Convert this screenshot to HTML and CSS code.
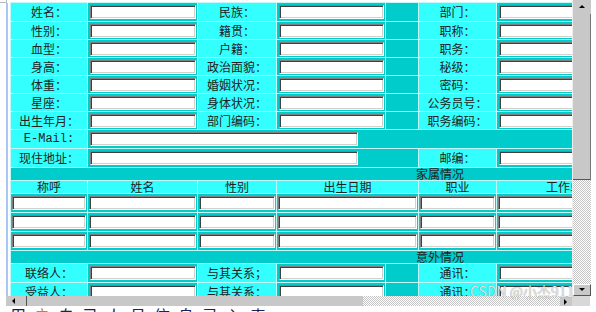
FILE: index.html
```html
<!DOCTYPE html>
<html lang="zh-CN">
<head>
<meta charset="UTF-8">
<title>员工信息录入</title>
<link rel="stylesheet" href="styles.css">
</head>
<body>
<div class="screen">
 <div class="corner-mark"></div>
 <div class="top">
  <div class="edge"></div>
  <div class="view">
   <table class="form">
    <colgroup>
     <col style="width:76px"><col style="width:109px"><col style="width:78px"><col style="width:108px">
     <col style="width:32px"><col style="width:77px"><col style="width:146px"><col style="width:225px">
    </colgroup>
    <tr>
     <td class="lb">姓名：</td><td class="in"><input></td>
     <td class="lb">民族：</td><td class="in"><input></td><td class="sp"></td>
     <td class="lb">部门：</td><td class="in"><input></td><td class="sp"></td>
    </tr>
    <tr class="s">
     <td class="lb">性别：</td><td class="in"><input></td>
     <td class="lb">籍贯：</td><td class="in"><input></td><td class="sp"></td>
     <td class="lb">职称：</td><td class="in"><input></td><td class="sp"></td>
    </tr>
    <tr class="s">
     <td class="lb">血型：</td><td class="in"><input></td>
     <td class="lb">户籍：</td><td class="in"><input></td><td class="sp"></td>
     <td class="lb">职务：</td><td class="in"><input></td><td class="sp"></td>
    </tr>
    <tr class="s">
     <td class="lb">身高：</td><td class="in"><input></td>
     <td class="lb">政治面貌：</td><td class="in"><input></td><td class="sp"></td>
     <td class="lb">秘级：</td><td class="in"><input></td><td class="sp"></td>
    </tr>
    <tr class="s">
     <td class="lb">体重：</td><td class="in"><input></td>
     <td class="lb">婚姻状况：</td><td class="in"><input></td><td class="sp"></td>
     <td class="lb">密码：</td><td class="in"><input></td><td class="sp"></td>
    </tr>
    <tr class="s">
     <td class="lb">星座：</td><td class="in"><input></td>
     <td class="lb">身体状况：</td><td class="in"><input></td><td class="sp"></td>
     <td class="lb">公务员号：</td><td class="in"><input></td><td class="sp"></td>
    </tr>
    <tr class="s">
     <td class="lb">出生年月：</td><td class="in"><input></td>
     <td class="lb">部门编码：</td><td class="in"><input></td><td class="sp"></td>
     <td class="lb">职务编码：</td><td class="in"><input></td><td class="sp"></td>
    </tr>
    <tr>
     <td class="lb mono">E-Mail:</td>
     <td class="in" colspan="7"><input class="long"></td>
    </tr>
    <tr>
     <td class="lb">现住地址：</td>
     <td class="in" colspan="4"><input class="long"></td>
     <td class="lb">邮编：</td><td class="in"><input></td><td class="sp"></td>
    </tr>
    <tr class="sec"><td colspan="8">家属情况</td></tr>
    <tr class="head">
     <td>称呼</td><td>姓名</td><td>性别</td><td colspan="2">出生日期</td><td>职业</td><td>工作单位</td><td>联系电话</td>
    </tr>
    <tr class="fam">
     <td class="in"><input></td><td class="in"><input></td><td class="in"><input></td><td class="in" colspan="2"><input></td>
     <td class="in"><input></td><td class="in"><input></td><td class="in"><input></td>
    </tr>
    <tr class="fam">
     <td class="in"><input></td><td class="in"><input></td><td class="in"><input></td><td class="in" colspan="2"><input></td>
     <td class="in"><input></td><td class="in"><input></td><td class="in"><input></td>
    </tr>
    <tr class="fam">
     <td class="in"><input></td><td class="in"><input></td><td class="in"><input></td><td class="in" colspan="2"><input></td>
     <td class="in"><input></td><td class="in"><input></td><td class="in"><input></td>
    </tr>
    <tr class="sec"><td colspan="8">意外情况</td></tr>
    <tr>
     <td class="lb">联络人：</td><td class="in"><input></td>
     <td class="lb">与其关系；</td><td class="in"><input></td><td class="sp"></td>
     <td class="lb">通讯：</td><td class="in"><input></td><td class="sp"></td>
    </tr>
    <tr>
     <td class="lb">受益人：</td><td class="in"><input></td>
     <td class="lb">与其关系：</td><td class="in"><input></td><td class="sp"></td>
     <td class="lb">通讯：</td><td class="in"><input></td><td class="sp"></td>
    </tr>
   </table>
  </div>
  <div class="vbar">
   <div class="btn up"><span class="tri-up"></span></div>
   <div class="thumb"></div>
   <div class="track"></div>
   <div class="btn down"><span class="tri-down"></span></div>
  </div>
 </div>
 <div class="bottom">
  <div class="hbar">
   <div class="btn left"><span class="tri-left"></span></div>
   <div class="thumb"></div>
   <div class="track"></div>
   <div class="btn right"><span class="tri-right"></span></div>
  </div>
  <div class="corner"></div>
 </div>
 <div class="caption">用<span class="hl">户</span>自己人员信息录入表</div>
 <div class="watermark">CSDN @小杰911</div>
</div>
</body>
</html>
```
FILE: styles.css
```css
body{margin:0;background:#fff;font-family:"Noto Sans CJK SC","Liberation Sans",sans-serif}
.screen{position:relative;width:596px;height:312px;overflow:hidden;background:#fff}
.corner-mark{position:absolute;left:0;top:0;width:6px;height:2px;border-bottom:1px solid #b8b8b8;border-right:1px solid #b8b8b8}

.top{display:flex;height:296px}
.edge{width:2px;margin:3px 0 0 6px;background:#a9c6f5}
.view{width:562px;padding:2px 0 0 2px;overflow:hidden}

.form{border-collapse:separate;border-spacing:1px;background:#c4f8f8;table-layout:fixed;width:860px}
.form td{padding:0;font-size:12px;line-height:14px;color:#222;white-space:nowrap;overflow:hidden}
.form tr{height:18px}
.form tr.s{height:17px}
.lb{background:#33ffff;text-align:center}
.mono{font-family:"Liberation Mono",monospace;font-size:11px}
.in{background:#00cccc;padding:1px 1px 1px 2px!important}
.sp{background:#00cccc}
.fam .in{padding:1px!important}
.form .sec td{background:#00cccc;text-align:center;line-height:12px;overflow:visible}
.form tr.sec{height:12px}
.form .head td{background:#33ffff;text-align:center;line-height:12px;overflow:visible}
.form tr.head{height:12px}

input{display:block;box-sizing:border-box;width:100%;height:14px;margin:0;padding:0;background:#fff;
 border:1px solid;border-color:#808080 #fff #fff #808080;box-shadow:inset 1px 1px #404040,inset -1px -1px #d4d0c8}
input.long{width:268px}

.btn{background:#c8c8c8;position:relative;box-sizing:border-box}
.thumb{background:#c8c8c8;box-sizing:border-box}
.track{flex:1;background:repeating-conic-gradient(#c4c4c4 0 25%,#fff 0 50%) 0 0/2px 2px}

.vbar{width:18px;display:flex;flex-direction:column;border-left:1px solid #eee}
.vbar .up{height:14px}
.vbar .thumb{height:166px;border-bottom:1px solid #555;border-right:1px solid #777}
.vbar .down{height:12px;border:1px solid #fff;border-right-color:#555;border-bottom-color:#555}

.bottom{display:flex;height:10px}
.hbar{display:flex;width:566px;margin-left:6px}
.hbar .left{width:21px;border-right:1px solid #555}
.hbar .thumb{width:336px}
.hbar .right{width:12px}
.corner{width:18px;background:#d8d8d8}

.tri-up,.tri-down,.tri-left,.tri-right{position:absolute;width:0;height:0;border:3px solid transparent}
.tri-up{left:6px;top:5px;border-bottom-color:#000;border-top:0}
.tri-down{left:5px;top:3px;border-top-color:#000;border-bottom:0}
.tri-left{left:6px;top:2px;border-right-color:#000;border-left:0}
.tri-right{left:4px;top:3px;border-left-color:#000;border-right:0}

.caption{height:6px;overflow:hidden;padding-left:10px;font-size:16px;line-height:18px;letter-spacing:8px;color:#1c2250}
.caption .hl{color:#d08020}
.watermark{position:absolute;left:470px;top:283px;font-size:14px;line-height:16px;color:#e4e4e4;text-shadow:0 0 1px rgba(0,0,0,.45)}
```
